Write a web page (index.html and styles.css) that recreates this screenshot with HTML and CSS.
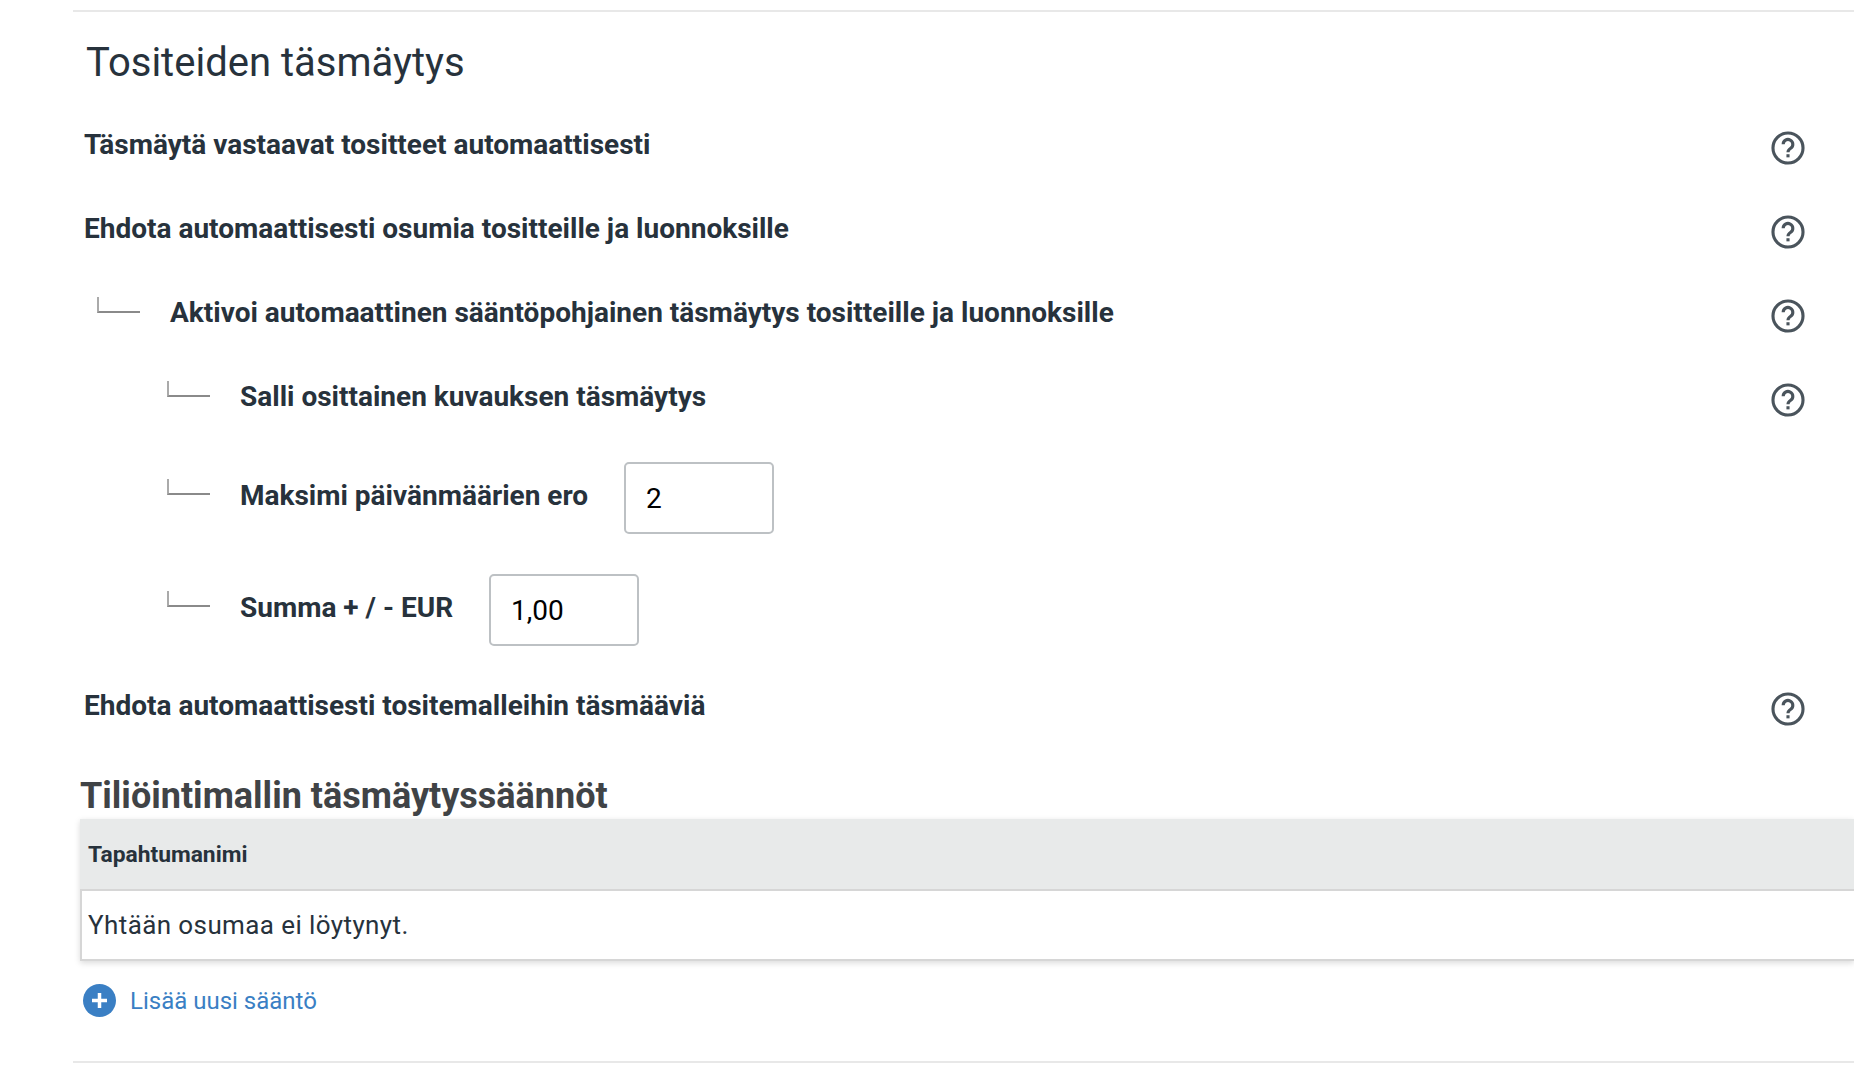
FILE: index.html
```html
<!DOCTYPE html>
<html lang="fi">
<head>
  <meta charset="UTF-8">
  <title>Tositeiden täsmäytys</title>
  <link rel="stylesheet" href="styles.css">
</head>
<body>
  <main class="settings">
    <h1 class="settings-title">Tositeiden täsmäytys</h1>

    <div class="row">
      <span class="row-label">Täsmäytä vastaavat tositteet automaattisesti</span>
      <svg class="help-icon" viewBox="0 0 24 24"><circle cx="12" cy="12" r="10.6"/><path d="M8.6 9.4a3.4 3.4 0 1 1 5.3 2.8c-1.2.8-1.9 1.4-1.9 2.8"/><rect class="dot" x="10.9" y="16.4" width="2.2" height="2.2"/></svg>
    </div>

    <div class="row">
      <span class="row-label">Ehdota automaattisesti osumia tositteille ja luonnoksille</span>
      <svg class="help-icon" viewBox="0 0 24 24"><circle cx="12" cy="12" r="10.6"/><path d="M8.6 9.4a3.4 3.4 0 1 1 5.3 2.8c-1.2.8-1.9 1.4-1.9 2.8"/><rect class="dot" x="10.9" y="16.4" width="2.2" height="2.2"/></svg>
    </div>

    <div class="row level-1">
      <span class="connector"></span>
      <span class="row-label">Aktivoi automaattinen sääntöpohjainen täsmäytys tositteille ja luonnoksille</span>
      <svg class="help-icon" viewBox="0 0 24 24"><circle cx="12" cy="12" r="10.6"/><path d="M8.6 9.4a3.4 3.4 0 1 1 5.3 2.8c-1.2.8-1.9 1.4-1.9 2.8"/><rect class="dot" x="10.9" y="16.4" width="2.2" height="2.2"/></svg>
    </div>

    <div class="row level-2">
      <span class="connector"></span>
      <span class="row-label">Salli osittainen kuvauksen täsmäytys</span>
      <svg class="help-icon" viewBox="0 0 24 24"><circle cx="12" cy="12" r="10.6"/><path d="M8.6 9.4a3.4 3.4 0 1 1 5.3 2.8c-1.2.8-1.9 1.4-1.9 2.8"/><rect class="dot" x="10.9" y="16.4" width="2.2" height="2.2"/></svg>
    </div>

    <div class="row level-2 row-input first-input">
      <span class="connector"></span>
      <span class="row-label">Maksimi päivänmäärien ero</span>
      <input class="text-input" type="text" value="2">
    </div>

    <div class="row level-2 row-input">
      <span class="connector"></span>
      <span class="row-label">Summa + / - EUR</span>
      <input class="text-input" type="text" value="1,00">
    </div>

    <div class="row">
      <span class="row-label">Ehdota automaattisesti tositemalleihin täsmääviä</span>
      <svg class="help-icon" viewBox="0 0 24 24"><circle cx="12" cy="12" r="10.6"/><path d="M8.6 9.4a3.4 3.4 0 1 1 5.3 2.8c-1.2.8-1.9 1.4-1.9 2.8"/><rect class="dot" x="10.9" y="16.4" width="2.2" height="2.2"/></svg>
    </div>

    <section class="rules">
      <h2 class="rules-title">Tiliöintimallin täsmäytyssäännöt</h2>
      <div class="rules-table">
        <div class="rules-head">Tapahtumanimi</div>
        <div class="rules-empty">Yhtään osumaa ei löytynyt.</div>
      </div>
      <a class="add-rule" href="#">
        <svg class="add-icon" viewBox="0 0 33 33"><circle cx="16.5" cy="16.5" r="16.5"/><path d="M16.5 9v15M9 16.5h15"/></svg>
        Lisää uusi sääntö
      </a>
    </section>
  </main>
</body>
</html>
```

FILE: styles.css
```css
/* General */
html, body {
  margin: 0;
  padding: 0;
  background: #fff;
}

body {
  font-family: Roboto, Arial, sans-serif;
  color: #27323c;
  overflow: hidden;
}

.settings {
  margin: 10px 0 0 73px;
  height: 1053px;
  box-sizing: border-box;
  border-top: 2px solid #e8e8e8;
  border-bottom: 2px solid #e8e8e8;
  padding: 0 49px 0 13px;
}

.settings-title {
  margin: 0;
  height: 100px;
  padding-top: 28px;
  box-sizing: border-box;
  font-size: 40px;
  line-height: 46px;
  font-weight: 400;
}

/* Rows */
.row {
  display: flex;
  align-items: center;
  height: 71px;
  margin-bottom: 13px;
}

.row-label {
  font-size: 28px;
  font-weight: 700;
  margin-bottom: 7px;
  margin-left: -2px;
}

.level-1 {
  padding-left: 11px;
}

.level-2 {
  padding-left: 81px;
}

.connector {
  flex: none;
  width: 43px;
  height: 16px;
  margin: 0 32px 22px 0;
  box-sizing: border-box;
  border-left: 2px solid #aaa;
  border-bottom: 2px solid #8a8a8a;
}

.help-icon {
  flex: none;
  width: 34px;
  height: 34px;
  margin-left: auto;
  fill: none;
  stroke: #4a545c;
  stroke-width: 2.2;
}

.help-icon .dot {
  fill: #4a545c;
  stroke: none;
}

/* Inputs */
.row-input {
  height: 72px;
  margin-bottom: 40px;
}

.first-input {
  margin-top: 27px;
}

.row-input + .row-input {
  margin-bottom: 27px;
}

.row-input .row-label {
  margin-bottom: 6px;
}

.text-input {
  width: 150px;
  height: 72px;
  margin-left: 36px;
  box-sizing: border-box;
  padding: 0 20px;
  border: 2px solid #bdc1c4;
  border-radius: 5px;
  font-family: Roboto, Arial, sans-serif;
  font-size: 28px;
  color: #000;
  background: #fff;
}

/* Rules table */
.rules {
  margin-top: 29px;
}

.rules-title {
  margin: 0 0 0 -6px;
  font-size: 36px;
  line-height: 46px;
  font-weight: 700;
  color: #404346;
}

.rules-table {
  margin: 0 -49px 0 -6px;
  box-shadow: 0 2px 6px rgba(0, 0, 0, 0.15);
}

.rules-head {
  height: 72px;
  box-sizing: border-box;
  padding: 0 8px;
  display: flex;
  align-items: center;
  background: #e8eaea;
  border-bottom: 2px solid #d6d6d6;
  font-size: 22.8px;
  font-weight: 700;
}

.rules-empty {
  height: 70px;
  box-sizing: border-box;
  padding: 0 6px;
  display: flex;
  align-items: center;
  background: #fff;
  border-left: 2px solid #d6d6d6;
  border-bottom: 2px solid #d6d6d6;
  font-size: 26px;
  letter-spacing: 0.4px;
}

.add-rule {
  display: flex;
  align-items: center;
  gap: 14px;
  margin: 23px 0 0 -3px;
  font-size: 24px;
  color: #3a7fc4;
  text-decoration: none;
}

.add-icon {
  width: 33px;
  height: 33px;
}

.add-icon circle {
  fill: #3a7fc4;
}

.add-icon path {
  fill: none;
  stroke: #fff;
  stroke-width: 3.5;
}
```
